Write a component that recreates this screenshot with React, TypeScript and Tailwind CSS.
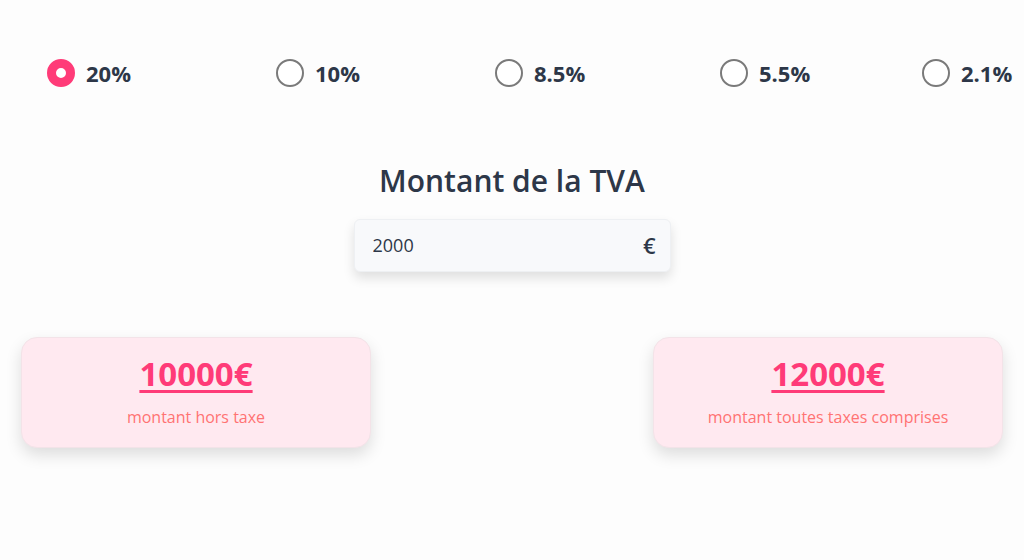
import React, { useState } from 'react';

const RATES = [
  { label: '20%', w: 'w-[229px]' },
  { label: '10%', w: 'w-[219px]' },
  { label: '8.5%', w: 'w-[225px]' },
  { label: '5.5%', w: 'w-[202px]' },
  { label: '2.1%', w: '' },
];

export default function App() {
  const [rate, setRate] = useState('20%');
  const [amount, setAmount] = useState('2000');

  return (
    <div className="min-h-screen bg-[#fdfdfd] font-['Open_Sans',sans-serif] text-[#2d3748] pt-[59px]">
      {/* Rate selector */}
      <div className="flex items-center pl-[47px]">
        {RATES.map((r) => (
          <label key={r.label} className={`${r.w} flex items-center gap-[11px] cursor-pointer`}>
            <span
              onClick={() => setRate(r.label)}
              className={
                rate === r.label
                  ? 'w-[28px] h-[28px] rounded-full border-[9px] border-[#ff3b78] bg-white'
                  : 'w-[28px] h-[28px] rounded-full border-2 border-[#7a7a7a] bg-white'
              }
            />
            <span className="text-[22px] font-bold leading-7">{r.label}</span>
          </label>
        ))}
      </div>

      {/* Title + input */}
      <div className="flex flex-col items-center mt-[76px]">
        <h1 className="text-[30px] font-semibold leading-9">Montant de la TVA</h1>
        <div className="mt-5 w-[317px] h-[53px] bg-[#f8f9fb] rounded-md border border-[#eef0f3] shadow-[0_6px_12px_rgba(0,0,0,0.12)] flex items-center justify-between pl-[18px] pr-[14px]">
          <input
            value={amount}
            onChange={(e) => setAmount(e.target.value)}
            className="bg-transparent outline-none text-[18px] w-40"
          />
          <span className="text-[22px] font-semibold">€</span>
        </div>
      </div>

      {/* Results */}
      <div className="flex justify-between px-[21px] mt-[65px]">
        <div className="w-[350px] h-[111px] rounded-2xl bg-[#ffe9f0] border border-[#f3e3e8] shadow-[0_7px_16px_rgba(0,0,0,0.13)] flex flex-col items-center pt-[16px]">
          <span className="text-[33px] font-bold leading-10 text-[#ff3b78] underline underline-offset-4">10000€</span>
          <span className="mt-[13px] text-[16px] font-medium leading-5 text-[#ff7373]">montant hors taxe</span>
        </div>
        <div className="w-[350px] h-[111px] rounded-2xl bg-[#ffe9f0] border border-[#f3e3e8] shadow-[0_7px_16px_rgba(0,0,0,0.13)] flex flex-col items-center pt-[16px]">
          <span className="text-[33px] font-bold leading-10 text-[#ff3b78] underline underline-offset-4">12000€</span>
          <span className="mt-[13px] text-[16px] font-medium leading-5 text-[#ff7373]">montant toutes taxes comprises</span>
        </div>
      </div>
    </div>
  );
}
